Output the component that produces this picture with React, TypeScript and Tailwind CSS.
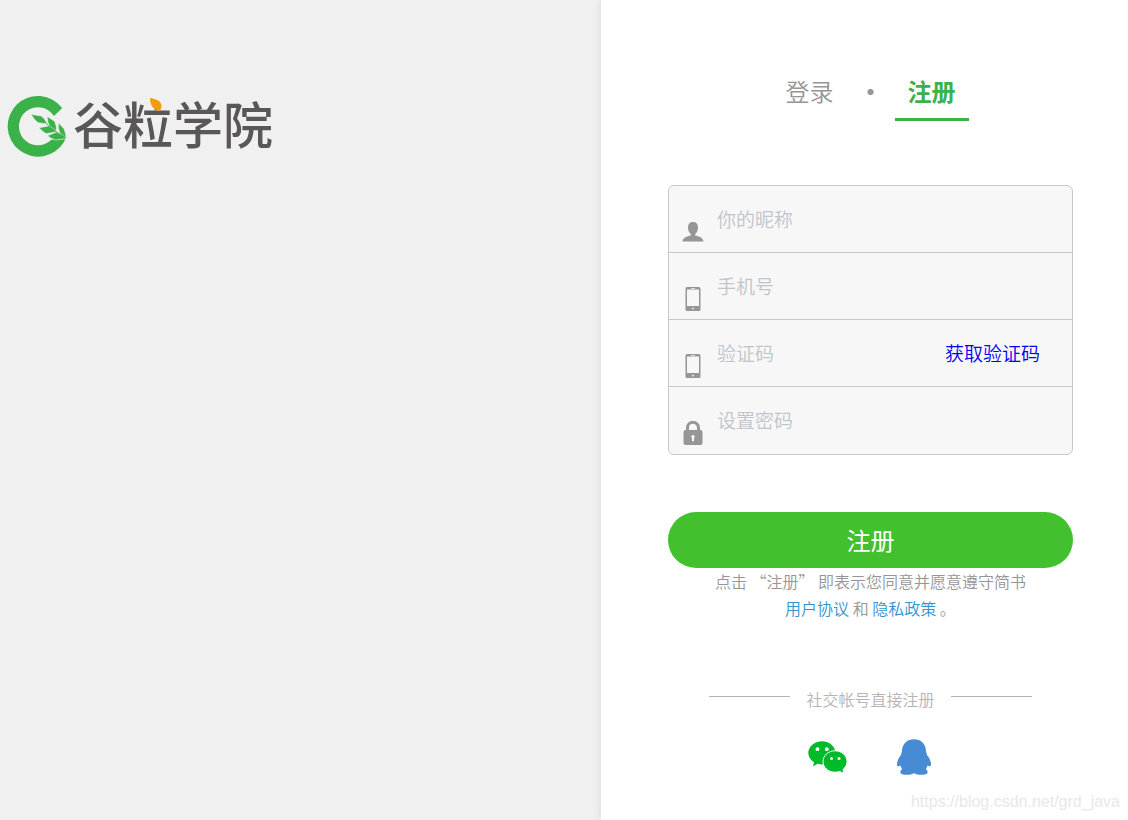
import type { FormEvent, ReactNode } from "react";

function LogoMark() {
  return (
    <svg viewBox="9 12 180 183" className="h-[61px] w-[60px]" aria-hidden="true">
      <path
        fill="#3bb149"
        d="M174.700 48.200A91 91 0 1 0 180 149.900L185 138L142 143.300A57 57 0 1 1 149.800 72Z"
      />
      <g fill="#3bb149" stroke="#f0f0f0" strokeWidth="2" strokeLinejoin="round">
        <path d="M81 67L112 72Q124 80 130 96L102 92Q90 84 81 67Z" />
        <path d="M129 73L152 88Q159 102 157 118L137 104Q130 90 129 73Z" />
        <path d="M105 107L133 102Q147 106 155 120L126 125Q114 118 105 107Z" />
        <path d="M163 92L180 110Q186 124 187 141L167 122Q161 108 163 92Z" />
        <path d="M130 131L156 121Q174 124 187 140L154 144Q140 140 130 131Z" />
      </g>
      <path fill="none" stroke="#3bb149" strokeWidth="3" d="M126 94C142 112 162 122 184 138" />
    </svg>
  );
}

function Logo() {
  return (
    <a href="#" className="flex items-start gap-1.5" aria-label="谷粒学院">
      <LogoMark />
      <span className="relative text-[50px] leading-[52px] font-medium text-[#595757]">
        谷粒学院
        <svg viewBox="0 0 12 13" className="absolute top-0.5 left-[77px] h-[13px] w-3" aria-hidden="true">
          <path fill="#f59a0c" d="M0 0C8 1 12 4 11.500 9L10 13C3 12 0 7 0 0Z" />
        </svg>
      </span>
    </a>
  );
}

function UserIcon() {
  return (
    <svg viewBox="0 0 22 20" className="mb-0.5 h-5 w-[22px]" fill="#969696" aria-hidden="true">
      <path d="M11 0C14.200 0 16 2 16 5.500C16 8.500 15 10.500 13.200 12V13.500C17 14.200 21 15.500 21.500 19.500H0.500C1 15.500 5 14.200 8.800 13.500V12C7 10.500 6 8.500 6 5.500C6 2 7.800 0 11 0Z" />
    </svg>
  );
}

function PhoneIcon() {
  return (
    <svg viewBox="0 0 16 24" className="h-6 w-4" aria-hidden="true">
      <path
        fill="#969696"
        fillRule="evenodd"
        d="M2 0H14Q15.500 0 15.500 1.500V22.500Q15.500 24 14 24H2Q0.500 24 0.500 22.500V1.500Q0.500 0 2 0ZM2 2.500V19H14V2.500ZM6 1V1.800H10V1ZM7.200 20.800V22.200H8.800V20.800Z"
      />
    </svg>
  );
}

function LockIcon() {
  return (
    <svg viewBox="0 0 20 24" className="h-6 w-5" aria-hidden="true">
      <path fill="none" stroke="#969696" strokeWidth="3" d="M4.500 10V6.500A5.500 5.200 0 0 1 15.500 6.500V10" />
      <rect x="0.500" y="9" width="19" height="15" rx="2" fill="#969696" />
      <path fill="#f7f7f7" d="M10 14A1.800 1.800 0 0 1 11 17.200V20.200H9V17.200A1.800 1.800 0 0 1 10 14Z" />
    </svg>
  );
}

function WechatIcon() {
  return (
    <svg viewBox="0 0 39 33" className="h-[33px] w-[39px]" aria-hidden="true">
      <path
        fill="#00bb29"
        d="M14 0.200C21.500 0.200 27.500 5.500 27.500 12C27.500 18.500 21.500 23.500 14 23.500C12.500 23.500 11 23.200 9.600 22.800L5 25.500L6 21.300C2.700 19.200 0.300 16 0.300 12C0.300 5.500 6.500 0.200 14 0.200Z"
      />
      <path
        fill="#00bb29"
        stroke="#fff"
        strokeWidth="1"
        d="M27 9.800C33.500 9.800 39 14.400 39 20.600C39 23.900 37.400 26.600 35 28.500L35.800 32.500L31.600 30.400C30.200 30.900 28.600 31.200 27 31.200C20.500 31.200 15 26.600 15 20.600C15 14.400 20.500 9.800 27 9.800Z"
      />
      <g fill="#fff">
        <circle cx="9.500" cy="8.200" r="1.900" />
        <circle cx="18.800" cy="8.200" r="1.900" />
        <circle cx="23.500" cy="17.500" r="1.500" />
        <circle cx="31" cy="17.500" r="1.500" />
      </g>
    </svg>
  );
}

function QqIcon() {
  return (
    <svg viewBox="0 0 34 36" className="h-9 w-[34px]" fill="#488bd5" aria-hidden="true">
      <path d="M17 0.300C24 0.300 28.800 5 29 12C29 13 29.800 14.500 30 16C32.500 19 34 22.500 34 25C34 27.500 32.800 28 31.800 27L30.500 26.500C30.200 28 29.500 29.200 28.800 30C30 31 30.600 32 30.600 33.200C30.600 35 28 35.800 23.500 35.800C20.500 35.800 18.500 35 17 34.200C15.500 35 13.500 35.800 10.500 35.800C6 35.800 3.400 35 3.400 33.200C3.400 32 4 31 5.200 30C4.500 29.200 3.800 28 3.500 26.500L2.200 27C1.200 28 0 27.500 0 25C0 22.500 1.500 19 4 16C4.200 14.500 5 13 5 12C5.200 5 10 0.300 17 0.300Z" />
    </svg>
  );
}

type FieldProps = {
  name: string;
  type?: string;
  placeholder: string;
  icon: ReactNode;
  children?: ReactNode;
};

function Field({ name, type = "text", placeholder, icon, children }: FieldProps) {
  return (
    <div className="flex h-[67px] items-start pl-3">
      <span className="flex h-[58px] w-6 items-end justify-center">{icon}</span>
      <input
        type={type}
        name={name}
        aria-label={placeholder}
        placeholder={placeholder}
        className="h-16 min-w-0 flex-1 bg-transparent px-3 text-[19px] text-gray-700 outline-none placeholder:text-[#c0c4cc]"
      />
      {children}
    </div>
  );
}

export default function RegisterPage() {
  const handleSubmit = (e: FormEvent) => {
    e.preventDefault();
  };

  return (
    <div className="relative flex min-h-screen bg-[#f0f0f0] font-['Noto_Sans_CJK_SC',sans-serif] font-[350]">
      <div className="min-w-0 flex-1 px-[7px] pt-24">
        <Logo />
      </div>

      <main className="w-[527px] bg-white pt-[65px] pr-[55px] pl-[67px] shadow-[0_0_8px_rgba(0,0,0,0.1)]">
        {/* Tabs */}
        <nav className="flex items-center justify-center text-2xl text-[#969696]">
          <a href="#login" className="h-14 px-[13px] leading-[52px]">
            登录
          </a>
          <span className="w-12 pb-1 text-center font-bold">·</span>
          <a
            href="#register"
            className="h-14 border-b-3 border-[#3bb149] px-[13px] leading-[52px] font-bold text-[#3bb149]"
          >
            注册
          </a>
        </nav>

        <form className="pt-16" onSubmit={handleSubmit}>
          <div className="divide-y divide-[#c8c8c8] rounded-md border border-[#c8c8c8] bg-[#f7f7f7]">
            <Field name="nickname" placeholder="你的昵称" icon={<UserIcon />} />
            <Field name="mobile" placeholder="手机号" icon={<PhoneIcon />} />
            <Field name="code" placeholder="验证码" icon={<PhoneIcon />}>
              <button type="button" className="h-[67px] pr-8 text-[19px] text-[#0000ee]">
                获取验证码
              </button>
            </Field>
            <Field name="password" type="password" placeholder="设置密码" icon={<LockIcon />} />
          </div>

          <button
            type="submit"
            className="mt-[57px] h-14 w-full rounded-full bg-[#42c02e] text-2xl font-normal text-white"
          >
            注册
          </button>
          <p className="text-center text-base leading-[27px] text-[#969696]">
            点击 “注册” 即表示您同意并愿意遵守简书
            <br />
            <a href="#terms" className="text-[#3194d0]">用户协议</a> 和{" "}
            <a href="#privacy" className="text-[#3194d0]">隐私政策</a> 。
          </p>
        </form>

        {/* Social sign up */}
        <section className="pt-16">
          <h6 className="flex justify-center gap-4 text-base leading-[26px] text-[#b5b5b5]">
            <span className="mt-2.5 h-px w-[81px] bg-[#b5b5b5]" />
            社交帐号直接注册
            <span className="mt-2.5 h-px w-[81px] bg-[#b5b5b5]" />
          </h6>
          <div className="flex items-center justify-center gap-[50px] pt-[27px] pr-0.5">
            <a href="#wechat" aria-label="微信">
              <WechatIcon />
            </a>
            <a href="#qq" aria-label="QQ">
              <QqIcon />
            </a>
          </div>
        </section>
      </main>

      <span className="absolute right-2 bottom-2 font-['Liberation_Sans',sans-serif] text-base leading-5 text-[#e8e8e8]">
        https://blog.csdn.net/grd_java
      </span>
    </div>
  );
}
